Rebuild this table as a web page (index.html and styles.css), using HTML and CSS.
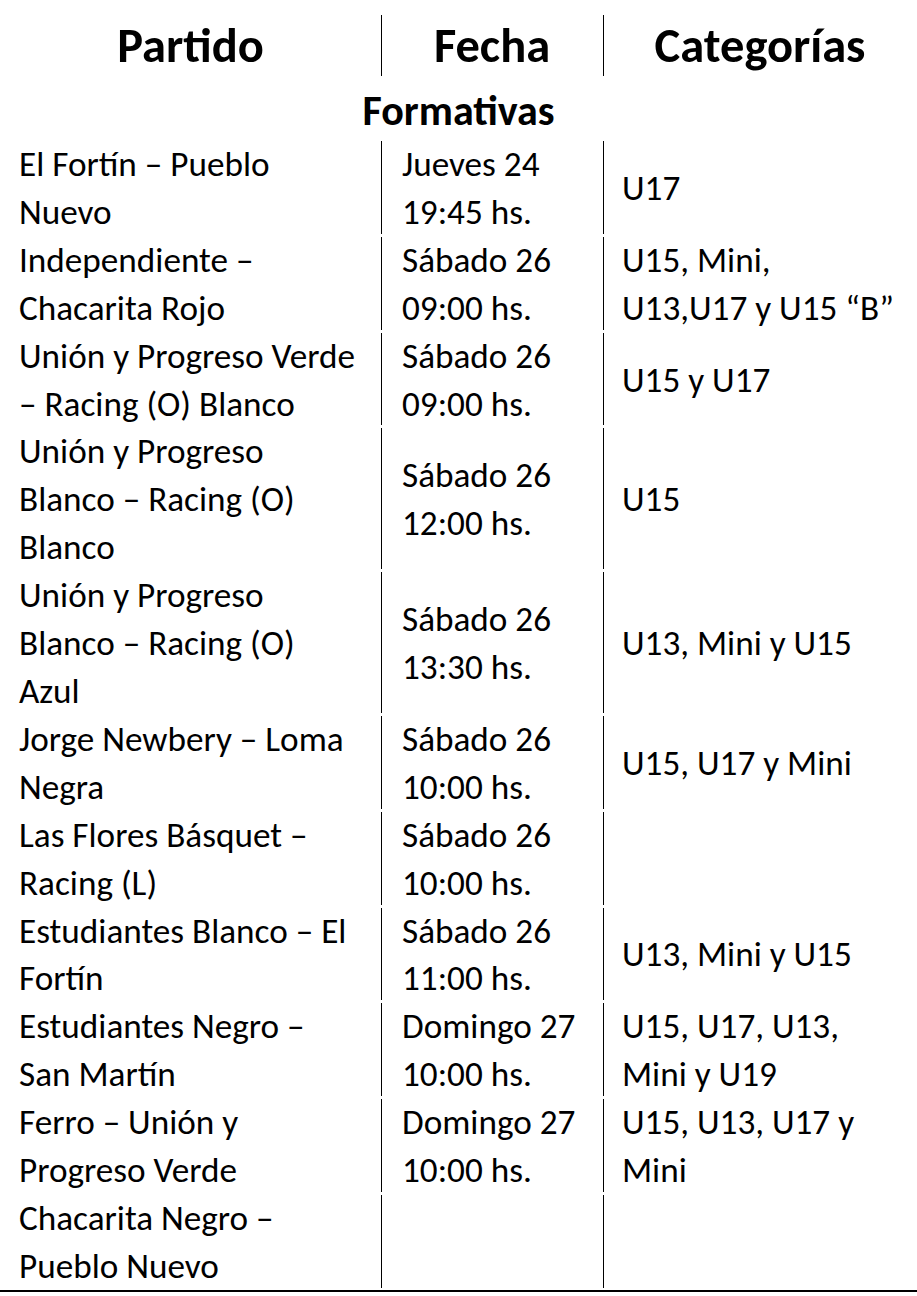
FILE: index.html
```html
<!DOCTYPE html>
<html lang="es">
<head>
<meta charset="utf-8">
<title>Formativas</title>
<link rel="stylesheet" href="styles.css">
</head>
<body>
<div class="sheet">
  <div class="head">
    <div class="hcell">Partido</div>
    <div class="hcell sep">Fecha</div>
    <div class="hcell sep">Categorías</div>
  </div>
  <div class="section">Formativas</div>
  <div class="rows">
    <div class="cell match">El Fortín – Pueblo<br>Nuevo</div>
    <div class="cell date sep">Jueves 24<br>19:45 hs.</div>
    <div class="cell cat sep">U17</div>

    <div class="cell match">Independiente –<br>Chacarita Rojo</div>
    <div class="cell date sep">Sábado 26<br>09:00 hs.</div>
    <div class="cell cat sep">U15, Mini,<br>U13,U17 y U15 “B”</div>

    <div class="cell match">Unión y Progreso Verde<br>– Racing (O) Blanco</div>
    <div class="cell date sep">Sábado 26<br>09:00 hs.</div>
    <div class="cell cat sep">U15 y U17</div>

    <div class="cell match">Unión y Progreso<br>Blanco – Racing (O)<br>Blanco</div>
    <div class="cell date sep">Sábado 26<br>12:00 hs.</div>
    <div class="cell cat sep">U15</div>

    <div class="cell match">Unión y Progreso<br>Blanco – Racing (O)<br>Azul</div>
    <div class="cell date sep">Sábado 26<br>13:30 hs.</div>
    <div class="cell cat sep">U13, Mini y U15</div>

    <div class="cell match">Jorge Newbery – Loma<br>Negra</div>
    <div class="cell date sep">Sábado 26<br>10:00 hs.</div>
    <div class="cell cat sep">U15, U17 y Mini</div>

    <div class="cell match">Las Flores Básquet –<br>Racing (L)</div>
    <div class="cell date sep">Sábado 26<br>10:00 hs.</div>
    <div class="cell cat sep"></div>

    <div class="cell match">Estudiantes Blanco – El<br>Fortín</div>
    <div class="cell date sep">Sábado 26<br>11:00 hs.</div>
    <div class="cell cat sep">U13, Mini y U15</div>

    <div class="cell match">Estudiantes Negro –<br>San Martín</div>
    <div class="cell date sep">Domingo 27<br>10:00 hs.</div>
    <div class="cell cat sep">U15, U17, U13,<br>Mini y U19</div>

    <div class="cell match">Ferro – Unión y<br>Progreso Verde</div>
    <div class="cell date sep">Domingo 27<br>10:00 hs.</div>
    <div class="cell cat sep">U15, U13, U17 y<br>Mini</div>

    <div class="cell match">Chacarita Negro –<br>Pueblo Nuevo</div>
    <div class="cell date sep"></div>
    <div class="cell cat sep"></div>
  </div>
</div>
</body>
</html>
```
FILE: styles.css
```css
html, body {
  margin: 0;
  padding: 0;
  background: #ffffff;
}

body {
  font-family: Carlito, Calibri, "Liberation Sans", sans-serif;
  color: #000000;
}

.sheet {
  width: 917px;
  padding-top: 14px;
}

.head {
  display: grid;
  grid-template-columns: 381px 222px 314px;
  height: 64px;
}

.hcell {
  display: flex;
  align-items: center;
  justify-content: center;
  font-size: 48.5px;
  font-weight: 700;
  line-height: 64px;
}

.sep {
  background-image: linear-gradient(#000000, #000000);
  background-repeat: no-repeat;
  background-position: 0 1px;
  background-size: 1px calc(100% - 3px);
}

.section {
  box-sizing: border-box;
  height: 62px;
  padding-top: 4px;
  display: flex;
  align-items: center;
  justify-content: center;
  font-size: 42px;
  font-weight: 700;
  line-height: 58px;
}

.rows {
  display: grid;
  grid-template-columns: 381px 222px 314px;
  border-bottom: 2px solid #000000;
}

.cell {
  font-size: 35.2px;
  line-height: 47.9px;
  display: flex;
  flex-direction: column;
  justify-content: center;
  white-space: nowrap;
}

.match {
  padding-left: 19px;
}

.date {
  padding-left: 21px;
}

.cat {
  padding-left: 19px;
}
```
